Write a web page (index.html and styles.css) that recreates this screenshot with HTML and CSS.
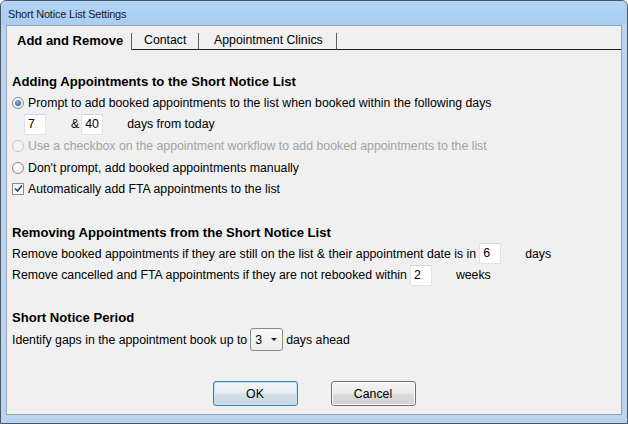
FILE: index.html
```html
<!DOCTYPE html>
<html>
<head>
<meta charset="utf-8">
<link rel="stylesheet" href="styles.css">
</head>
<body>
<div class="window">
  <div class="titlebar"><span class="title">Short Notice List Settings</span></div>
  <div class="client">
    <div class="tabs">
      <div class="tab active">Add and Remove</div>
      <div class="tab contact">Contact</div>
      <div class="tab clinics">Appointment Clinics</div>
      <div class="tab-fill"></div>
    </div>
    <div class="panel">
      <div class="row heading first">Adding Appointments to the Short Notice List</div>
      <div class="row tight"><span class="radio checked"></span><span>Prompt to add booked appointments to the list when booked within the following days</span></div>
      <div class="row indent"><span class="field">7</span><span class="amp">&amp;</span><span class="field">40</span><span class="after">days from today</span></div>
      <div class="row disabled"><span class="radio"></span><span>Use a checkbox on the appointment workflow to add booked appointments to the list</span></div>
      <div class="row tight"><span class="radio"></span><span>Don't prompt, add booked appointments manually</span></div>
      <div class="row tight"><span class="check"><svg width="9" height="9" viewBox="0 0 9 9"><path d="M1 4.5 L3.5 7 L8 1.5" fill="none" stroke="#25407a" stroke-width="1.6"/></svg></span><span>Automatically add FTA appointments to the list</span></div>

      <div class="row heading section">Removing Appointments from the Short Notice List</div>
      <div class="row tight"><span>Remove booked appointments if they are still on the list &amp; their appointment date is in</span><span class="field near">6</span><span class="after">days</span></div>
      <div class="row"><span>Remove cancelled and FTA appointments if they are not rebooked within</span><span class="field near">2</span><span class="after">weeks</span></div>

      <div class="row heading section2">Short Notice Period</div>
      <div class="row tall"><span>Identify gaps in the appointment book up to</span><span class="select"><span class="select-val">3</span><span class="arrow"></span></span><span class="ahead">days ahead</span></div>
    </div>
    <div class="buttons">
      <div class="btn default">OK</div>
      <div class="btn">Cancel</div>
    </div>
  </div>
</div>
</body>
</html>
```
FILE: styles.css
```css
html, body {
  margin: 0;
  padding: 0;
  background: #ffffff;
}
.window {
  box-sizing: border-box;
  width: 628px;
  height: 424px;
  border: 1px solid #4a5665;
  border-radius: 6px 6px 0 0;
  background: #bad3ee;
  padding: 0 5px 8px 5px;
  display: flex;
  flex-direction: column;
  font-family: "Liberation Sans", Arial, sans-serif;
  color: #000;
}
.titlebar {
  height: 24px;
  margin: 0 -5px;
  padding-left: 7px;
  background: linear-gradient(#b3d4f4, #a9cdf1);
  border-radius: 5px 5px 0 0;
  display: flex;
  align-items: center;
}
.title {
  font-size: 11px;
  letter-spacing: -0.2px;
  color: #1a1a1a;
  padding-top: 1px;
}
.client {
  flex: 1;
  background: #f0f0f0;
  border: 1px solid #9aa4ae;
  display: flex;
  flex-direction: column;
}
.tabs {
  height: 24px;
  display: flex;
  align-items: flex-end;
}
.tab {
  box-sizing: border-box;
  height: 17px;
  line-height: 15px;
  font-size: 12.3px;
  border-right: 1px solid #5e5e5e;
  border-bottom: 1px solid #1e1e1e;
  white-space: nowrap;
}
.tab.active {
  width: 125px;
  padding-left: 10px;
  font-weight: bold;
  font-size: 13px;
  border-bottom: none;
  height: 17px;
  line-height: 16px;
}
.tab.contact {
  width: 67px;
  padding-left: 12px;
}
.tab.clinics {
  width: 138px;
  padding-left: 15px;
}
.tab-fill {
  flex: 1;
  border-bottom: 1px solid #1e1e1e;
}
.panel {
  padding: 20px 0 0 5px;
  display: flex;
  flex-direction: column;
  font-size: 12.3px;
}
.row {
  height: 22px;
  display: flex;
  align-items: center;
  white-space: nowrap;
}
.row.tight {
  height: 21px;
}
.row.tall {
  height: 23px;
}
.heading {
  font-weight: bold;
  font-size: 13.1px;
}
.heading.section {
  margin-top: 22px;
}
.heading.section2 {
  margin-top: 20px;
}
.indent {
  padding-left: 12px;
}
.radio {
  box-sizing: border-box;
  width: 12px;
  height: 12px;
  border-radius: 50%;
  border: 1px solid #8c8c8c;
  background: radial-gradient(circle at 40% 35%, #ffffff, #e4e4e4);
  margin-right: 4px;
  position: relative;
  flex: none;
}
.radio.checked::after {
  content: "";
  position: absolute;
  left: 2px;
  top: 2px;
  width: 6px;
  height: 6px;
  border-radius: 50%;
  background: radial-gradient(circle at 40% 35%, #8fb0d8, #1d4f8a);
}
.disabled {
  color: #a3a3a3;
}
.disabled .radio {
  border-color: #c6c6c6;
  background: #f4f4f4;
}
.check {
  box-sizing: border-box;
  width: 12px;
  height: 12px;
  border: 1px solid #8c8c8c;
  background: linear-gradient(#f0f0f0, #ffffff);
  margin-right: 4px;
  display: flex;
  align-items: center;
  justify-content: center;
  flex: none;
}
.field {
  box-sizing: border-box;
  width: 22px;
  height: 21px;
  background: #ffffff;
  border: 1px solid #e2e3ea;
  border-top-color: #d4d5db;
  padding-left: 3px;
  line-height: 19px;
  flex: none;
}
.field.near {
  margin-left: 3px;
}
.amp {
  margin-left: 25px;
  margin-right: 2px;
}
.after {
  margin-left: 24px;
}
.select {
  box-sizing: border-box;
  width: 33px;
  height: 23px;
  margin-left: 3px;
  border: 1px solid #8a8a8a;
  border-radius: 3px;
  background: linear-gradient(#f8f8f8, #ececec);
  display: flex;
  align-items: center;
  padding-left: 4px;
  position: relative;
}
.select-val {
  flex: 1;
}
.arrow {
  width: 0;
  height: 0;
  border-left: 3px solid transparent;
  border-right: 3px solid transparent;
  border-top: 3px solid #222;
  margin-right: 5px;
}
.ahead {
  margin-left: 3px;
}
.buttons {
  margin-top: 30px;
  display: flex;
  justify-content: center;
  gap: 33px;
}
.btn {
  box-sizing: border-box;
  width: 85px;
  height: 25px;
  border: 1px solid #707070;
  border-radius: 3px;
  background: linear-gradient(#f3f3f3 0%, #ebebeb 48%, #dddddd 52%, #cfcfcf 100%);
  font-size: 12.3px;
  display: flex;
  align-items: center;
  justify-content: center;
  box-shadow: inset 0 0 0 1px #fcfcfc;
}
.btn.default {
  border-color: #3c7fb1;
  box-shadow: inset 0 0 0 1px #bde4f8;
  background: linear-gradient(#f0f4f7 0%, #e8edf1 48%, #d6e0e8 52%, #c8d5e0 100%);
}
```
